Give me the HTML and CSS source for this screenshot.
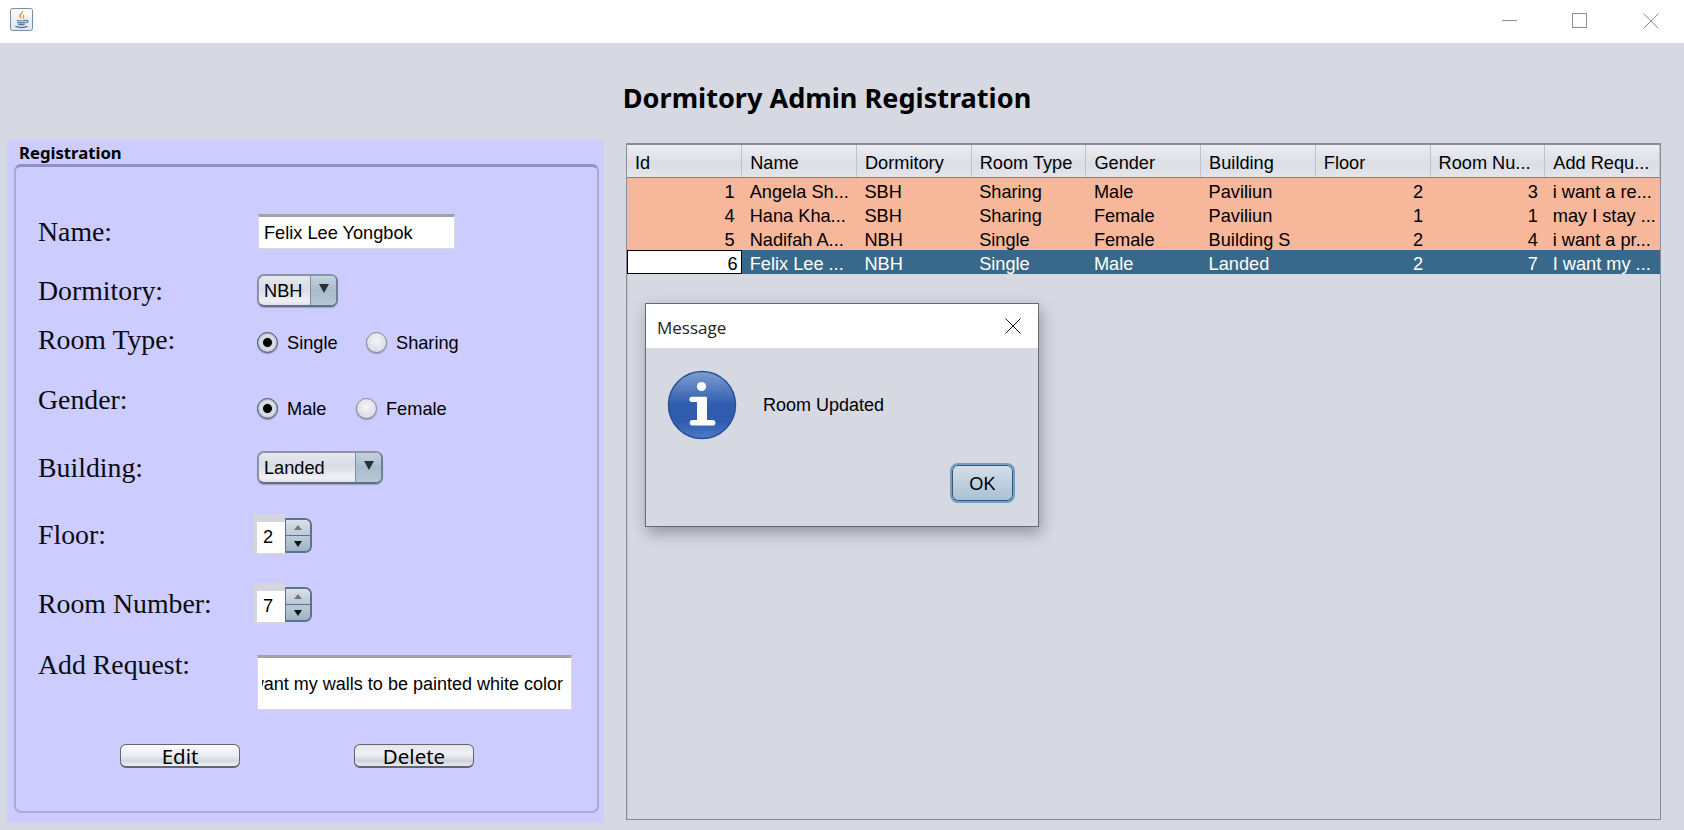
FILE: index.html
```html
<!DOCTYPE html>
<html lang="en">
<head>
<meta charset="utf-8">
<title>Dormitory Admin Registration</title>
<link rel="stylesheet" href="styles.css">
</head>
<body>
<div class="app">
  <header class="titlebar">
    <div class="java-icon">
      <svg width="23" height="23" viewBox="0 0 23 23">
        <defs><linearGradient id="jg" x1="0" y1="0" x2="0" y2="1"><stop offset="0" stop-color="#fdfdfe"/><stop offset="1" stop-color="#dfe4ea"/></linearGradient></defs>
        <rect x=".5" y=".5" width="22" height="22" rx="2" fill="url(#jg)" stroke="#6f8fad"/>
        <path d="M12.800 2.500c1.200 2.500-3 3.700-2 6.500.3.900.9 1.500 1 2.300-1.500-1-3-2.500-2.300-4.400.6-1.600 2.800-2.300 3.300-4.400z" fill="#e57b1f"/>
        <path d="M14.500 6c-1.700 1-2.300 1.900-1.600 3.300.3.700.3 1.300-.1 2 1.700-.9 1.900-1.900 1.200-3.100-.3-.7 0-1.400.5-2.200z" fill="#ea9440"/>
        <path d="M7 12.300c2.200.7 6.800.7 9 0M7.200 14.400c2.200.6 6.200.6 8.400 0M8.300 16.400c1.800.5 4.600.5 6.400 0M5.500 18.400c3.200 1.200 8.800 1.200 12 0M16 12.600c2.200-.6 2.800 1.500.3 2.400" fill="none" stroke="#47759b" stroke-width="1.200"/>
      </svg>
    </div>
    <div class="win-controls">
      <svg width="16" height="16" viewBox="0 0 16 16" class="win-min"><path d="M0 7.500h15" stroke="#8d8d8d"/></svg>
      <svg width="16" height="16" viewBox="0 0 16 16" class="win-max"><rect x=".5" y=".5" width="14" height="14" fill="none" stroke="#8d8d8d"/></svg>
      <svg width="16" height="16" viewBox="0 0 16 16" class="win-close"><path d="M.5.500l15 15M15.500.500l-15 15" stroke="#8d8d8d" fill="none"/></svg>
    </div>
  </header>

  <h1 class="page-title">Dormitory Admin Registration</h1>

  <main class="content">
    <section class="panel">
      <div class="panel-title">Registration</div>
      <div class="panel-box">
        <div class="row row-name">
          <label class="label">Name:</label>
          <div class="field field-name">Felix Lee Yongbok</div>
        </div>
        <div class="row row-dorm">
          <label class="label">Dormitory:</label>
          <div class="combo combo-dorm"><span class="combo-text">NBH</span><span class="combo-arrow"><i class="tri-down"></i></span></div>
        </div>
        <div class="row row-type">
          <label class="label label-up2">Room Type:</label>
          <span class="radio radio-on"></span><span class="radio-text text-single">Single</span>
          <span class="radio"></span><span class="radio-text">Sharing</span>
        </div>
        <div class="row row-gender">
          <label class="label label-up8">Gender:</label>
          <span class="radio radio-on"></span><span class="radio-text text-male">Male</span>
          <span class="radio"></span><span class="radio-text">Female</span>
        </div>
        <div class="row row-building">
          <label class="label">Building:</label>
          <div class="combo combo-building"><span class="combo-text">Landed</span><span class="combo-arrow"><i class="tri-down"></i></span></div>
        </div>
        <div class="row row-floor">
          <label class="label">Floor:</label>
          <div class="spinner"><div class="spin-field"><span>2</span></div><div class="spin-btns"><div class="spin-up"><i class="tri-up"></i></div><div class="spin-down"><i class="tri-small"></i></div></div></div>
        </div>
        <div class="row row-room">
          <label class="label">Room Number:</label>
          <div class="spinner"><div class="spin-field"><span>7</span></div><div class="spin-btns"><div class="spin-up"><i class="tri-up"></i></div><div class="spin-down"><i class="tri-small"></i></div></div></div>
        </div>
        <div class="row row-request">
          <label class="label label-top">Add Request:</label>
          <div class="field field-request"><div class="request-clip"><span>I want my walls to be painted white color</span></div></div>
        </div>
        <div class="row row-actions">
          <button class="btn btn-edit">Edit</button>
          <button class="btn btn-delete">Delete</button>
        </div>
      </div>
    </section>

    <section class="table-wrap">
      <table class="grid">
        <thead>
          <tr><th>Id</th><th>Name</th><th>Dormitory</th><th>Room Type</th><th>Gender</th><th>Building</th><th>Floor</th><th>Room Nu...</th><th>Add Requ...</th></tr>
        </thead>
        <tbody>
          <tr><td class="num">1</td><td>Angela Sh...</td><td>SBH</td><td>Sharing</td><td>Male</td><td>Paviliun</td><td class="num">2</td><td class="num">3</td><td>i want a re...</td></tr>
          <tr><td class="num">4</td><td>Hana Kha...</td><td>SBH</td><td>Sharing</td><td>Female</td><td>Paviliun</td><td class="num">1</td><td class="num">1</td><td>may I stay ...</td></tr>
          <tr><td class="num">5</td><td>Nadifah A...</td><td>NBH</td><td>Single</td><td>Female</td><td>Building S</td><td class="num">2</td><td class="num">4</td><td>i want a pr...</td></tr>
          <tr class="selected"><td class="num focus-cell">6</td><td>Felix Lee ...</td><td>NBH</td><td>Single</td><td>Male</td><td>Landed</td><td class="num">2</td><td class="num">7</td><td>I want my ...</td></tr>
        </tbody>
      </table>
    </section>
  </main>

  <div class="dialog">
    <div class="dialog-title">
      <span>Message</span>
      <svg width="16" height="16" viewBox="0 0 16 16"><path d="M.5.500l15 15M15.500.500l-15 15" stroke="#111" fill="none"/></svg>
    </div>
    <div class="dialog-body">
      <svg class="info-icon" width="70" height="70" viewBox="0 0 70 70">
        <defs><linearGradient id="ig" x1="0" y1="0" x2="0" y2="1"><stop offset="0" stop-color="#7f9fd0"/><stop offset=".5" stop-color="#2f5caf"/><stop offset=".75" stop-color="#2f5caf"/><stop offset="1" stop-color="#4d7cca"/></linearGradient></defs>
        <circle cx="35" cy="35" r="33.500" fill="url(#ig)" stroke="#2a4f96" stroke-width="1.500"/>
        <circle cx="34.500" cy="16.500" r="4.600" fill="#fff"/>
        <path d="M25 26.700h14a1 1 0 0 1 1 1V50h5.600a2.800 2.800 0 0 1 0 5.600H25.500a2.800 2.800 0 0 1 0-5.600H30V32h-5a2.650 2.650 0 0 1 0-5.300z" fill="#fff"/>
      </svg>
      <span class="dialog-msg">Room Updated</span>
    </div>
    <div class="dialog-actions"><button class="ok-btn">OK</button></div>
  </div>
</div>
</body>
</html>
```

FILE: styles.css
```css
* { box-sizing: border-box; }
html, body { margin: 0; padding: 0; }
body { width: 1684px; height: 830px; overflow: hidden; background: #d6d9e2; font-family: "Liberation Sans", Arial, sans-serif; font-size: 18.2px; color: #000; }
.app { position: relative; width: 1684px; height: 830px; display: flex; flex-direction: column; }

.titlebar { height: 43px; background: #fff; display: flex; align-items: flex-start; justify-content: space-between; flex: none; }
.java-icon { margin: 8px 0 0 10px; width: 23px; height: 23px; }
.java-icon svg { display: block; }
.win-controls { display: flex; margin: 13px 25px 0 0; }
.win-controls svg { display: block; }
.win-max { margin-left: 54px; }
.win-close { margin-left: 55px; }

.page-title { margin: 0; height: 97px; padding-top: 36px; text-align: center; font: 700 27.1px/38px "Noto Sans", sans-serif; width: 1654px; }

.content { display: flex; padding-left: 7px; gap: 22px; flex: none; }

.panel { width: 597px; height: 683px; background: #ccccff; padding: 0 5px 10px 7px; display: flex; flex-direction: column; }
.panel-title { height: 24px; padding-left: 5px; font: 700 16.7px/26px "Noto Sans", sans-serif; }
.panel-box { flex: 1; border: 2px solid #a9a9d6; border-top: 3px solid #8f8fc4; border-radius: 7px; padding: 47px 0 0 22px; display: flex; flex-direction: column; }

.row { display: flex; align-items: center; flex: none; }
.row-name { height: 35px; }
.row-dorm { height: 33px; margin-top: 25px; }
.row-type { height: 24px; margin-top: 23px; }
.row-gender { height: 24px; margin-top: 42px; }
.row-building { height: 33px; margin-top: 31px; }
.row-floor { height: 41px; margin-top: 30px; }
.row-room { height: 41px; margin-top: 28px; }
.row-request { height: 55px; margin-top: 31px; align-items: flex-start; }
.row-actions { height: 24px; margin-top: 34px; padding-left: 82px; }

.label { width: 219px; flex: none; font: 400 27.8px/32px "Liberation Serif", serif; color: #0a0a14; }
.label-up2 { margin-top: -4px; }
.label-up8 { margin-top: -16px; }
.label-top { margin-top: -6px; }

.field { background: #fff; border: 1px solid #d8d8e0; border-top: 3px solid #a3a3a3; overflow: hidden; white-space: nowrap; }
.field-name { width: 197px; height: 35px; line-height: 33px; padding-left: 5px; margin-left: 1px; }
.field-request { width: 315px; height: 55px; line-height: 52px; padding: 0 8px 0 4px; font-size: 18px; }
.request-clip { display: flex; justify-content: flex-end; overflow: hidden; height: 100%; }
.request-clip span { flex: none; }

.combo { height: 33px; display: flex; border: 2px solid #6e7f92; border-color: #8a94a4 #6e7f92 #5f7186 #8a94a4; border-radius: 7px; overflow: hidden; background: linear-gradient(#e6e8ee, #d9dce4 45%, #f0f1f5 85%, #dfe2ea); box-shadow: 0 1px 1px rgba(90,90,130,.4); }
.combo-dorm { width: 81px; }
.combo-building { width: 126px; }
.combo-text { flex: 1; line-height: 31px; padding-left: 5px; }
.combo-arrow { width: 26px; flex: none; background: linear-gradient(#c4d2df, #a9bccd 50%, #b6c8d6); border-left: 1px solid #7e8fa1; display: flex; justify-content: center; padding-top: 8px; }
.tri-down { display: block; width: 0; height: 0; border-left: 5px solid transparent; border-right: 5px solid transparent; border-top: 9px solid #2e2e30; }

.radio { width: 21px; height: 21px; border-radius: 50%; flex: none; border: 1px solid #7f8a96; background: radial-gradient(circle at 50% 40%, #f4f5f7, #dcdee4 70%, #c6c9d2); box-shadow: 0 1px 1px rgba(70,80,100,.5); }
.radio-on { border-color: #46566a; background: radial-gradient(circle at 50% 50%, #000 0 4px, #c9d4de 5px, #dde3ea 7px, #9fb0bf 10px); }
.radio-text { margin-left: 9px; padding-top: 2px; }
.text-single { width: 69px; margin-right: 10px; }
.text-male { width: 59px; margin-right: 10px; }

.spinner { display: flex; margin-left: -4px; height: 41px; }
.spin-field { width: 32px; background: #d5d5de; padding: 8px 0 2px 4px; }
.spin-field span { display: block; height: 31px; background: #fff; line-height: 30px; padding-left: 6px; }
.spin-btns { width: 27px; height: 35px; margin-top: 4px; border: 2px solid #5f7387; border-left-width: 1px; border-radius: 0 7px 7px 0; display: flex; flex-direction: column; overflow: hidden; }
.spin-up, .spin-down { flex: 1; display: flex; align-items: center; justify-content: center; }
.spin-up { background: linear-gradient(#d9e0e8, #bcc9d6); border-bottom: 1px solid #5f7387; }
.spin-down { background: linear-gradient(#bccbd9, #9fb4c7); }
.tri-up { display: block; width: 0; height: 0; border-left: 4px solid transparent; border-right: 4px solid transparent; border-bottom: 5px solid #777; }
.tri-small { display: block; width: 0; height: 0; border-left: 4px solid transparent; border-right: 4px solid transparent; border-top: 6px solid #111; }

.btn { height: 24px; width: 120px; padding: 0; border: 1px solid #60656e; border-bottom-width: 2px; border-radius: 6px; background: linear-gradient(#fbfcfd, #e8eaf0 55%, #d2d5dd 75%, #f0f1f4); font: 400 20.5px/20px "Noto Sans", sans-serif; color: #000; }
.btn-delete { margin-left: 114px; background: linear-gradient(#e4e6ea, #eef0f3 45%, #cfd2d9 75%, #e8e9ed); }

.table-wrap { width: 1035px; height: 677px; margin-top: 3px; border: 1px solid #8a8d98; border-top-width: 2px; box-shadow: inset 1px 0 0 #c3c6cf; }
.grid { width: 1033px; border-collapse: collapse; table-layout: fixed; }
.grid th { height: 32px; padding: 5px 0 0 8px; text-align: left; font-weight: 400; font-size: 18.2px; background: linear-gradient(#eceef2, #dadde4 60%, #e4e6ec); border-right: 1px solid #bfc2cb; border-bottom: 1px solid #7f828c; white-space: nowrap; overflow: hidden; }
.grid td { height: 24px; padding: 4px 0 0 8px; background: #f7b79a; white-space: nowrap; overflow: hidden; line-height: 20px; }
.grid td.num { text-align: right; padding: 4px 7px 0 0; }
.grid .selected td { background: #39698a; color: #fff; }
.grid .selected td.focus-cell { background: #fff; color: #000; box-shadow: inset 0 0 0 1px #000; padding-right: 4px; }

.dialog { position: absolute; left: 645px; top: 303px; width: 394px; height: 224px; background: #d6d9e2; border: 1px solid #666a72; box-shadow: 2px 6px 14px rgba(40,40,50,.38); display: flex; flex-direction: column; }
.dialog-title { height: 44px; background: #fff; display: flex; align-items: center; justify-content: space-between; padding: 4px 17px 0 11px; flex: none; font: 400 17px/24px "Open Sans", sans-serif; color: #222; }
.dialog-title svg { margin-top: -5px; }
.dialog-body { display: flex; align-items: center; height: 114px; padding: 0 0 0 21px; }
.info-icon { display: block; flex: none; }
.dialog-msg { margin-left: 26px; font-size: 18px; }
.dialog-actions { display: flex; justify-content: flex-end; padding: 1px 23px 0 0; }
.ok-btn { width: 65px; height: 40px; border: 2px solid #6f9fcb; border-radius: 8px; padding: 3px 0 0; background: linear-gradient(#d5dfe9, #a9c0d6); box-shadow: inset 0 0 0 1px #41566c; font: 400 18.2px "Liberation Sans", sans-serif; color: #000; }
```
